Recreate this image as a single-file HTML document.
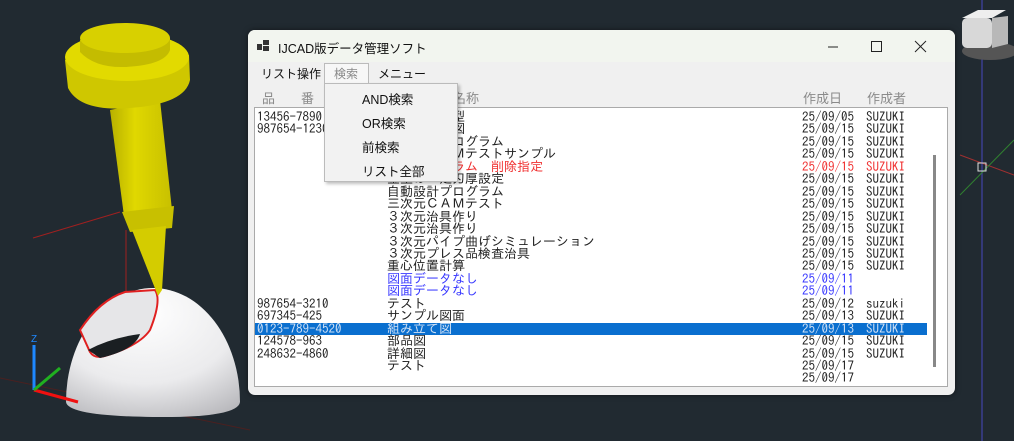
<!DOCTYPE html>
<html><head><meta charset="utf-8"><style>
body{margin:0;width:1014px;height:441px;overflow:hidden;background:#212a31;position:relative;font-family:"Liberation Sans","Noto Sans CJK JP",sans-serif}
#cad{position:absolute;left:0;top:0}
.win{position:absolute;left:248px;top:30px;width:707px;height:365px;background:#f0f0f0;border-radius:7px;box-shadow:0 0 6px rgba(0,0,0,.5);overflow:hidden}
.title{position:absolute;left:0;top:0;width:100%;height:32px;background:#f2f5ef}
.title .t{position:absolute;left:30px;top:8px;font-size:12.5px;color:#111}
.menu{position:absolute;top:35px;font-size:12px;color:#111}
.hdr{position:absolute;top:58px;font-size:13px;color:#8a8a8a}
.list{position:absolute;left:6px;top:77px;width:692px;height:278px;background:#fff;border:1px solid #aaa;font-family:"IPAGothic","Noto Sans CJK JP",monospace;font-size:13px;color:#222}
.r{position:absolute;left:0;width:672px;height:12.45px;line-height:12.45px;white-space:pre}
.r span{position:absolute;top:0}
.a{left:2px}.b{left:132px}.c{left:547px}.d{left:611px}
.red{color:#f03030}.blue{color:#3a3aff}
.sel{background:#0a6fcf;color:#cfe0f5}
.dd{position:absolute;left:324px;top:83px;width:132px;height:97px;background:#f2f2f2;border:1px solid #bbb;box-shadow:2px 2px 3px rgba(0,0,0,.25);font-size:12.5px;color:#111}
.dd div{position:absolute;left:37px}
</style></head><body>
<svg id="cad" width="1014" height="441">
<defs>
<radialGradient id="sph" cx="0.45" cy="0.2" r="0.9"><stop offset="0" stop-color="#fff"/><stop offset="0.6" stop-color="#ebebed"/><stop offset="1" stop-color="#b8b8bc"/></radialGradient>
<linearGradient id="shaft" x1="0" x2="1"><stop offset="0" stop-color="#b8b000"/><stop offset="0.4" stop-color="#e0d800"/><stop offset="1" stop-color="#c8c000"/></linearGradient>
</defs>
<line x1="33" y1="238" x2="120" y2="212" stroke="#a02020"/>
<line x1="126" y1="230" x2="126" y2="292" stroke="#a02020"/>
<line x1="0" y1="378" x2="250" y2="430" stroke="#4a2020"/>
<path d="M66 402 A87 114 0 0 1 240 402 Q238 418 153 417 Q68 416 66 402Z" fill="url(#sph)"/>
<path d="M80 330 Q100 300 125 292 L155 290 Q162 300 150 330 Q140 345 108 355 Q95 360 90 352Z" fill="#e6e6e8" stroke="#e02020" stroke-width="2"/>
<path d="M88 350 Q110 338 140 334 Q135 350 100 358Z" fill="#1a1f22"/>
<path d="M110 110 L160 100 L172 210 L124 216Z" fill="url(#shaft)"/>
<path d="M122 212 L174 206 L172 228 L130 232Z" fill="#c8c000"/>
<path d="M132 230 L166 226 L162 290 L158 296Z" fill="#d4cc00"/>
<path d="M65 60 L68 88 Q80 112 130 108 Q185 104 190 80 L189 55Z" fill="#cfc700"/>
<ellipse cx="127" cy="57" rx="62" ry="24" fill="#e2da00"/>
<path d="M80 40 L80 52 Q95 68 125 67 Q165 65 170 50 L170 38Z" fill="#c4bc00"/>
<ellipse cx="125" cy="38" rx="45" ry="15" fill="#d8d000"/>
<line x1="34" y1="390" x2="34" y2="345" stroke="#1e88ff" stroke-width="3"/>
<line x1="34" y1="390" x2="78" y2="402" stroke="#f01010" stroke-width="3"/>
<line x1="34" y1="390" x2="60" y2="368" stroke="#20b020" stroke-width="3"/>
<text x="31" y="342" font-size="10" fill="#1e88ff" font-family="Liberation Sans">Z</text>
<line x1="982" y1="0" x2="982" y2="441" stroke="#4848c0"/>
<line x1="960" y1="155" x2="1014" y2="175" stroke="#a03030"/>
<line x1="960" y1="195" x2="1014" y2="140" stroke="#308030"/>
<rect x="978" y="163" width="8" height="8" fill="none" stroke="#ddd"/>
<ellipse cx="990" cy="51" rx="28" ry="9" fill="#555"/>
<rect x="962" y="18" width="30" height="30" rx="5" fill="#d8d8d8"/>
<path d="M992 18 L1008 16 L1008 44 L992 48Z" fill="#b8b8b8"/>
<path d="M962 18 L978 10 L1006 10 L992 18Z" fill="#eee"/>
</svg>
<div class="win">
<div class="title"><svg style="position:absolute;left:9px;top:10px" width="13" height="12"><rect x="0" y="4" width="5" height="6" fill="#333"/><rect x="6" y="0" width="6" height="5" fill="#333"/><rect x="6" y="6" width="6" height="5" fill="#333"/></svg>
<span class="t">IJCAD版データ管理ソフト</span>
<svg style="position:absolute;left:580px;top:10px" width="120" height="14"><line x1="0" y1="7" x2="10" y2="7" stroke="#222"/><rect x="43.5" y="1.5" width="10" height="10" fill="none" stroke="#222"/><line x1="87" y1="1" x2="98" y2="12" stroke="#222"/><line x1="98" y1="1" x2="87" y2="12" stroke="#222"/></svg>
</div>
<div class="menu" style="left:13px">リスト操作</div>
<div style="position:absolute;left:76px;top:33px;width:43px;height:21px;background:#f7f7f7;border:1px solid #bbb;border-bottom:none"></div>
<div class="menu" style="left:86px;color:#888">検索</div>
<div class="menu" style="left:130px">メニュー</div>
<div class="hdr" style="left:14px">品　　番</div>
<div class="hdr" style="left:205px">名称</div>
<div class="hdr" style="left:555px">作成日</div>
<div class="hdr" style="left:619px">作成者</div>
<div class="list">
<div class="r" style="top:3px"><span class="a">13456-7890</span><span class="b">プレス抜き型</span><span class="c">25/09/05</span><span class="d">SUZUKI</span></div>
<div class="r" style="top:15.45px"><span class="a">987654-1230</span><span class="b">順送板金型図</span><span class="c">25/09/15</span><span class="d">SUZUKI</span></div>
<div class="r" style="top:27.9px"><span class="b">自動ＮＣプログラム</span><span class="c">25/09/15</span><span class="d">SUZUKI</span></div>
<div class="r" style="top:40.35px"><span class="b">三次元ＣＡＭテストサンプル</span><span class="c">25/09/15</span><span class="d">SUZUKI</span></div>
<div class="r red" style="top:52.8px"><span class="b">自動プログラム　削除指定</span><span class="c">25/09/15</span><span class="d">SUZUKI</span></div>
<div class="r" style="top:65.25px"><span class="b">金型の一定刃厚設定</span><span class="c">25/09/15</span><span class="d">SUZUKI</span></div>
<div class="r" style="top:77.7px"><span class="b">自動設計プログラム</span><span class="c">25/09/15</span><span class="d">SUZUKI</span></div>
<div class="r" style="top:90.15px"><span class="b">三次元ＣＡＭテスト</span><span class="c">25/09/15</span><span class="d">SUZUKI</span></div>
<div class="r" style="top:102.6px"><span class="b">３次元治具作り</span><span class="c">25/09/15</span><span class="d">SUZUKI</span></div>
<div class="r" style="top:115.05px"><span class="b">３次元治具作り</span><span class="c">25/09/15</span><span class="d">SUZUKI</span></div>
<div class="r" style="top:127.5px"><span class="b">３次元パイプ曲げシミュレーション</span><span class="c">25/09/15</span><span class="d">SUZUKI</span></div>
<div class="r" style="top:139.95px"><span class="b">３次元プレス品検査治具</span><span class="c">25/09/15</span><span class="d">SUZUKI</span></div>
<div class="r" style="top:152.4px"><span class="b">重心位置計算</span><span class="c">25/09/15</span><span class="d">SUZUKI</span></div>
<div class="r blue" style="top:164.85px"><span class="b">図面データなし</span><span class="c">25/09/11</span></div>
<div class="r blue" style="top:177.3px"><span class="b">図面データなし</span><span class="c">25/09/11</span></div>
<div class="r" style="top:189.75px"><span class="a">987654-3210</span><span class="b">テスト</span><span class="c">25/09/12</span><span class="d">suzuki</span></div>
<div class="r" style="top:202.2px"><span class="a">697345-425</span><span class="b">サンプル図面</span><span class="c">25/09/13</span><span class="d">SUZUKI</span></div>
<div class="r sel" style="top:214.65px"><span class="a">0123-789-4520</span><span class="b">組み立て図</span><span class="c">25/09/13</span><span class="d">SUZUKI</span></div>
<div class="r" style="top:227.1px"><span class="a">124578-963</span><span class="b">部品図</span><span class="c">25/09/15</span><span class="d">SUZUKI</span></div>
<div class="r" style="top:239.55px"><span class="a">248632-4860</span><span class="b">詳細図</span><span class="c">25/09/15</span><span class="d">SUZUKI</span></div>
<div class="r" style="top:252px"><span class="b">テスト</span><span class="c">25/09/17</span></div>
<div class="r" style="top:264.45px"><span class="c">25/09/17</span></div>
<div style="position:absolute;left:678px;top:47px;width:3px;height:212px;background:#888"></div>
</div>
</div>
<div class="dd">
<div style="top:5px">AND検索</div>
<div style="top:29px">OR検索</div>
<div style="top:53px">前検索</div>
<div style="top:77px">リスト全部</div>
</div>
</body></html>
